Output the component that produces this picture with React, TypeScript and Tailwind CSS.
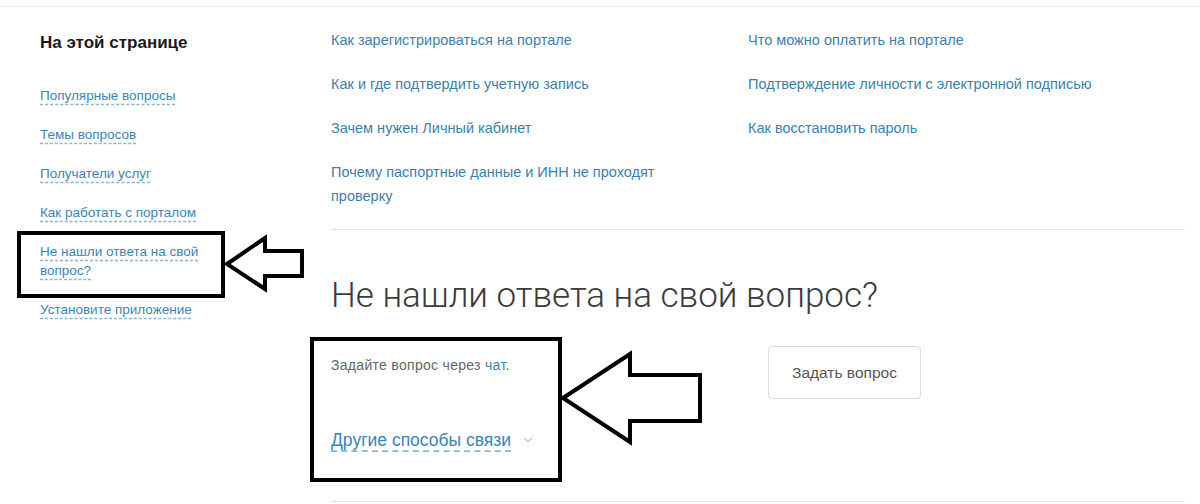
import { ChevronDown } from "lucide-react";

const sideLinks = [
  "Популярные вопросы",
  "Темы вопросов",
  "Получатели услуг",
  "Как работать с порталом",
  "Не нашли ответа на свой вопрос?",
  "Установите приложение",
];

const leftFaq = [
  "Как зарегистрироваться на портале",
  "Как и где подтвердить учетную запись",
  "Зачем нужен Личный кабинет",
  "Почему паспортные данные и ИНН не проходят проверку",
];

const rightFaq = [
  "Что можно оплатить на портале",
  "Подтверждение личности с электронной подписью",
  "Как восстановить пароль",
];

function Annotations() {
  // black frames + arrows drawn over the page
  return (
    <svg
      className="absolute inset-0 pointer-events-none"
      width="1200"
      height="504"
      viewBox="0 0 1200 504"
    >
      <rect x="19" y="233" width="204" height="63" fill="none" stroke="#000" strokeWidth="4" />
      <polygon
        points="227,264 265,238 265,251 302,251 302,276 265,276 265,289"
        fill="#fff"
        stroke="#000"
        strokeWidth="4"
        strokeLinejoin="miter"
      />
      <rect x="312" y="339" width="248" height="141" fill="none" stroke="#000" strokeWidth="4" />
      <polygon
        points="563,398 630,354 630,375 700,375 700,421 630,421 630,442"
        fill="#fff"
        stroke="#000"
        strokeWidth="4"
        strokeLinejoin="miter"
      />
    </svg>
  );
}

export default function App() {
  return (
    <div className="relative w-[1200px] h-[504px] bg-white overflow-hidden font-['Liberation_Sans',Arial,sans-serif]">
      <div className="mt-[6px] border-t border-[#ececec]" />
      <div className="flex">
        <aside className="w-[331px] pl-10 pt-[26px]">
          <h3 className="text-[17px] leading-[20px] font-bold text-[#1a1a1a]">На этой странице</h3>
          <ul className="mt-[33px] flex flex-col gap-[20px] w-[172px]">
            {sideLinks.map((l) => (
              <li key={l} className="text-[13.5px] leading-[19px]">
                <a className="text-[#3a84b9] underline decoration-dashed decoration-[#8bb4d2] underline-offset-[4px]">
                  {l}
                </a>
              </li>
            ))}
          </ul>
        </aside>
        <main className="w-[854px] pt-[21px]">
          <div className="flex">
            <ul className="w-[417px] flex flex-col gap-[20px]">
              {leftFaq.map((q) => (
                <li key={q} className="text-[14.5px] leading-[24px] text-[#3a7fae] pr-[60px]">
                  {q}
                </li>
              ))}
            </ul>
            <ul className="flex flex-col gap-[20px]">
              {rightFaq.map((q) => (
                <li key={q} className="text-[14.5px] leading-[24px] text-[#3a7fae]">
                  {q}
                </li>
              ))}
            </ul>
          </div>
          <div className="mt-[21px] border-t border-[#dedede]" />
          <h2 className="mt-[46px] text-[35px] leading-[40px] font-light text-[#3b3b3b] font-['Roboto',sans-serif]">
            Не нашли ответа на свой вопрос?
          </h2>
          <div className="flex mt-[30px]">
            <div className="w-[437px] pt-[10px]">
              <p className="text-[14px] leading-[18px] tracking-[0.3px] text-[#666]">
                Задайте вопрос через <a className="text-[#3a84b9]">чат</a>.
              </p>
              <div className="mt-[56px] flex items-center gap-[10px]">
                <a className="text-[17.5px] leading-[20px] text-[#3a84b9] underline decoration-dashed decoration-[#8bb4d2] underline-offset-[5px]">
                  Другие способы связи
                </a>
                <ChevronDown className="w-[14px] h-[14px] text-[#6d8fae]" strokeWidth={1.5} />
              </div>
            </div>
            <button className="w-[153px] h-[53px] border border-[#dcdcdc] rounded-[4px] text-[15.5px] text-[#555] bg-white">
              Задать вопрос
            </button>
          </div>
          <div className="mt-[51px] border-t border-[#dedede]" />
        </main>
      </div>
      <Annotations />
    </div>
  );
}
